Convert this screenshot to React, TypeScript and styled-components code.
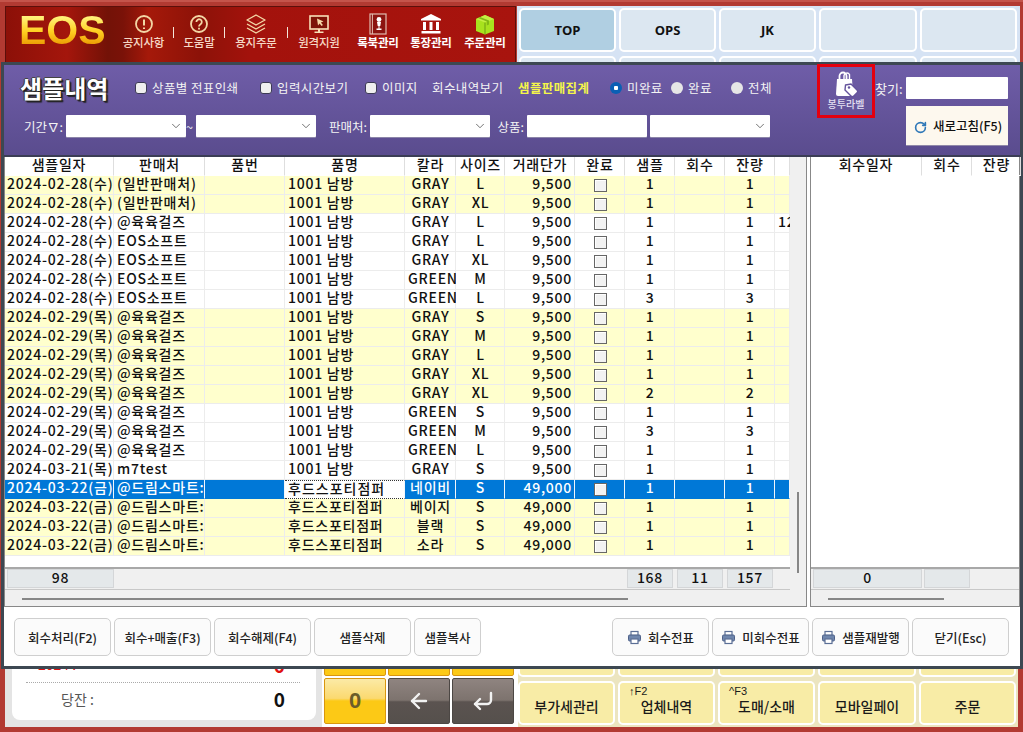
import React from "react";
import styled, { createGlobalStyle } from "styled-components";
import { RotateCw, ChevronDown, ArrowLeft, CornerDownLeft } from "lucide-react";

const FONT = '"Noto Sans CJK KR", "Noto Sans", sans-serif';

const Global = createGlobalStyle`
  html, body { margin: 0; padding: 0; background: #b23a32; }
  #root { width: 1023px; height: 732px; overflow: hidden; }
  * { box-sizing: border-box; }
`;

const Frame = styled.div`
  position: relative;
  width: 1023px;
  height: 732px;
  overflow: hidden;
  display: flex;
  flex-direction: column;
  justify-content: space-between;
  background: #b23a32;
  font-family: ${FONT};
  color: #111;
`;

/* ---------- background application ---------- */
const TopBar = styled.header`
  height: 62px;
  overflow: hidden;
  display: flex;
  padding: 4px 5px 0 5px;
  border-top: 2px solid #c4544b;
`;
const NavPanel = styled.nav`
  width: 512px;
  height: 58px;
  display: flex;
  border: 1px solid #5c0f0a;
  border-bottom: 2px solid #c8392c;
  background: linear-gradient(90deg, #8c1008 0, #a4160c 12%, #731207 20%, #7a1208 23%, #a5190a 28%, #8c1208 38%, #a3120c 48%, #a8140e 100%);
`;
const Logo = styled.div`
  width: 109px;
  padding-left: 13px;
  font: 700 41px/46px "Liberation Sans", sans-serif;
  background: linear-gradient(180deg, #fff27a 18%, #ffcf20 45%, #e89400 72%, #f8c010 85%);
  -webkit-background-clip: text;
  background-clip: text;
  color: transparent;
`;
const NavItem = styled.div<{ $w: number; $strong?: boolean }>`
  width: ${(p) => p.$w}px;
  flex: none;
  display: flex;
  flex-direction: column;
  align-items: center;
  padding-top: 6px;
  color: ${(p) => (p.$strong ? "#fff" : "#f6d8c6")};
  font-size: 11.5px;
  font-weight: ${(p) => (p.$strong ? 700 : 500)};
  letter-spacing: -0.2px;
  line-height: 14px;
  white-space: nowrap;
  svg { display: block; height: 22px; }
`;
const NavSep = styled.i`
  width: 1px;
  height: 11px;
  margin: 20px 1px 0;
  background: #f4e6da;
  flex: none;
`;
const CatGrid = styled.div`
  flex: 1;
  margin-left: 1px;
  display: grid;
  grid-template-columns: 97px 97px 97px 98px 97px;
  grid-auto-rows: 44px;
  gap: 4px 3px;
  background: #d6e3f4;
  padding: 2px 3px 0 2px;
`;
const CatButton = styled.div<{ $active?: boolean }>`
  display: flex;
  align-items: center;
  justify-content: center;
  border: 2px solid #fff;
  border-radius: 5px;
  background: ${(p) => (p.$active ? "#b0cfe2" : "#dce7f1")};
  font: 700 13px "Open Sans", sans-serif;
  color: #111;
`;

const BottomBar = styled.footer`
  height: 72px;
  display: flex;
  padding: 0 5px 5px 5px;
`;
const TotalsPanel = styled.section`
  width: 317px;
  padding: 0 6px 7px 7px;
  background: #e4e4e4;
  display: flex;
  flex-direction: column;
`;
const TotalsCard = styled.div`
  flex: 1;
  min-height: 0;
  background: #fff;
  border-radius: 0 0 8px 8px;
  padding: 0 16px 0 14px;
  display: flex;
  flex-direction: column;
  justify-content: flex-end;
`;
const TotalRow = styled.div<{ $red?: boolean }>`
  flex: none;
  display: flex;
  justify-content: space-between;
  height: ${(p) => (p.$red ? 36 : 38)}px;
  padding-bottom: ${(p) => (p.$red ? 0 : 6)}px;
  align-items: center;
  padding-left: ${(p) => (p.$red ? 12 : 35)}px;
  color: ${(p) => (p.$red ? "#e01010" : "#555")};
  font-size: 14px;
  & + & { border-top: 1px dotted #aaa; }
  b { color: ${(p) => (p.$red ? "#e01010" : "#111")}; font-size: 19px; font-weight: 700; margin-right: 15px; }
`;
const Keypad = styled.div`
  width: 196px;
  background: #fff;
  display: grid;
  grid-template-columns: repeat(3, 62px);
  grid-template-rows: 16px 46px;
  gap: 2px;
  padding: 0 0 3px 2px;
`;
const Key = styled.div<{ $dark?: boolean }>`
  display: flex;
  align-items: center;
  justify-content: center;
  border-radius: 2px;
  border: 1px solid ${(p) => (p.$dark ? "#4c4744" : "#d9960f")};
  background: ${(p) =>
    p.$dark
      ? "linear-gradient(180deg, #8f8480 0, #7d736e 48%, #5b5350 52%, #55504c 100%)"
      : "linear-gradient(180deg, #fbeaa6 0, #fbd970 44%, #fcc916 50%, #fcc916 100%)"};
  color: ${(p) => (p.$dark ? "#f2f2f2" : "#6d5d2a")};
  font: 700 22px "Liberation Sans", sans-serif;
`;
const ActionGrid = styled.div`
  flex: 1;
  display: grid;
  grid-template-columns: 97px 97px 97px 98px 97px;
  grid-template-rows: 17px 44px;
  gap: 4px 3px;
  padding: 0 0 2px 0;
  background: #ece5c0;
`;
const ActionButton = styled.div`
  position: relative;
  display: flex;
  align-items: center;
  justify-content: center;
  padding-top: 6px;
  border: 2px solid #fff;
  border-radius: 5px;
  background: #f8eca6;
  font-size: 14px;
  font-weight: 500;
  color: #1a1a1a;
`;
const Hint = styled.span`
  position: absolute;
  left: 9px;
  top: 2px;
  font: 400 11px "Liberation Sans", sans-serif;
`;

/* ---------- sample window ---------- */
const Window = styled.main`
  position: absolute;
  left: 1px;
  top: 62px;
  width: 1022px;
  height: 607px;
  border: 3px solid #3d4852;
  background: #fff;
  display: flex;
  flex-direction: column;
`;
const Head = styled.section`
  height: 92px;
  flex: none;
  display: flex;
  border-bottom: 2px solid #3b3d55;
  background: linear-gradient(180deg, #6f5da8 0, #5a4c8e 100%);
  color: #f4f4f4;
`;
const HeadMain = styled.div`
  width: 813px;
  flex: none;
`;
const OptionRow = styled.div`
  height: 46px;
  padding-left: 16px;
  display: flex;
  align-items: center;
`;
const Title = styled.h1`
  width: 115px;
  margin: 0;
  font-size: 24px;
  font-weight: 700;
  line-height: 1;
  color: #fff;
  text-shadow: 1px 1px 0 #222, -1px 0 0 #333, 0 -1px 0 #444, 2px 2px 1px #222;
`;
const Option = styled.label<{ $w: number; $yellow?: boolean; $bold?: boolean }>`
  width: ${(p) => p.$w}px;
  flex: none;
  display: flex;
  align-items: center;
  gap: 5px;
  font-size: 12.5px;
  letter-spacing: 0.4px;
  line-height: 1.3;
  white-space: nowrap;
  font-weight: ${(p) => (p.$bold ? 700 : 400)};
  color: ${(p) => (p.$yellow ? "#f4f54a" : "#f4f4f4")};
`;
const CheckMark = styled.i`
  width: 12px;
  height: 12px;
  border-radius: 3px;
  background: #efefef;
  border: 1px solid #3c3a55;
  flex: none;
`;
const RadioMark = styled.i<{ $on?: boolean }>`
  width: 12px;
  height: 12px;
  border-radius: 50%;
  flex: none;
  background: ${(p) =>
    p.$on ? "radial-gradient(circle, #fff 0 2px, #0a5fb4 2.5px)" : "#e6e6e6"};
`;
const FilterRow = styled.div`
  margin-top: 4px;
  height: 22px;
  display: flex;
  align-items: center;
  font-size: 12.5px;
`;
const FilterLabel = styled.span<{ $w: number }>`
  width: ${(p) => p.$w}px;
  flex: none;
  text-align: right;
  padding-right: 3px;
  white-space: nowrap;
`;
const Field = styled.div<{ $gap?: number }>`
  width: 120px;
  height: 22px;
  flex: none;
  margin-left: ${(p) => p.$gap || 0}px;
  background: #fff;
  border-radius: 1px;
  display: flex;
  align-items: center;
  justify-content: flex-end;
  padding-right: 3px;
  color: #555;
  box-shadow: 0 1px 0 #8b84a8;
`;
const LabelButton = styled.div`
  width: 58px;
  height: 54px;
  margin-top: -1px;
  flex: none;
  border: 3px solid #e4000f;
  display: flex;
  flex-direction: column;
  align-items: center;
  padding-top: 4px;
  font-size: 10px;
  font-weight: 500;
  line-height: 12px;
  color: #e4e0f2;
  svg { display: block; margin-bottom: 0; }
`;
const HeadSide = styled.div`
  flex: 1;
  padding: 12px 0 0 0;
  display: grid;
  grid-template-columns: 31px 102px;
  grid-template-rows: 22px 40px;
  row-gap: 7px;
  align-content: start;
  font-size: 13px;
`;
const FindLabel = styled.span`
  align-self: center;
`;
const FindInput = styled.div`
  background: #fff;
  border-radius: 1px;
`;
const RefreshButton = styled.div`
  grid-column: 2;
  background: #fdf8ee;
  border-bottom: 1px solid #9088a8;
  display: flex;
  align-items: center;
  gap: 6px;
  padding-left: 8px;
  color: #111;
  font-size: 12.5px;
  font-weight: 500;
  white-space: nowrap;
  svg { margin-top: 3px; color: #2f78b8; }
`;

const Panels = styled.section`
  height: 450px;
  flex: none;
  display: flex;
  gap: 3px;
`;
const ListPanel = styled.div<{ $w: number }>`
  width: ${(p) => p.$w}px;
  flex: none;
  display: flex;
  border: 1px solid #888;
  border-top: 0;
  background: #f0f0f0;
`;
const TableArea = styled.div`
  flex: 1;
  min-width: 0;
  display: flex;
  flex-direction: column;
`;
const COLS = "109px 91px 80px 120px 51px 49px 70px 50px 50px 50px 50px 15px";
const SUBCOLS = "111px 50px 49px";
const Row = styled.div<{ $cols: string; $bg?: string; $fg?: string }>`
  display: grid;
  grid-template-columns: ${(p) => p.$cols};
  height: 19px;
  flex: none;
  background: ${(p) => p.$bg || "#fff"};
  color: ${(p) => p.$fg || "#111"};
  font-size: 14px;
  font-weight: 500;
  letter-spacing: 0.75px;
  line-height: 15px;
`;
const Cell = styled.div<{ $align?: string; $head?: boolean; $focus?: boolean; $dark?: boolean; $cut?: boolean }>`
  min-width: 0;
  white-space: nowrap;
  padding: 0 2px 0 3px;
  text-align: ${(p) => p.$align || "left"};
  border-right: 1px solid ${(p) => (p.$dark ? "#f2f6fb" : p.$head ? "#dedede" : "#ececec")};
  border-bottom: 1px solid ${(p) => (p.$dark ? "#0078d7" : p.$head ? "#fff" : "#ececec")};
  &:first-child { padding-left: 2px; }
  ${(p) => p.$cut && "clip-path: inset(-4px 0 -4px 0);"}
  ${(p) => p.$focus && "background:#fff;color:#111;border-bottom:1px dotted #333;border-top:1px dotted #333;line-height:14px;letter-spacing:1px;"}
`;
const TickCell = styled(Cell)`
  display: flex;
  align-items: center;
  justify-content: center;
`;
const Tick = styled.i`
  width: 13px;
  height: 13px;
  background: #f2f2f2;
  border: 1px solid #666;
  box-shadow: inset 1px 1px 0 #fff;
`;
const Filler = styled.div`
  flex: 1;
  background: #fff;
`;
const Summary = styled.div<{ $cols: string }>`
  height: 22px;
  flex: none;
  display: grid;
  grid-template-columns: ${(p) => p.$cols};
  border-top: 2px solid #a8a8a8;
  background: #f0f0f0;
  font-size: 14px;
  font-weight: 500;
  letter-spacing: 0.75px;
  line-height: 15px;
`;
const SumCell = styled.div<{ $hide?: boolean; $first?: boolean }>`
  height: 19px;
  margin: 0 ${(p) => (p.$first ? 0 : 2)}px 0 2px;
  text-align: center;
  ${(p) => !p.$hide && "background:#e4e8ea;border:1px solid #d4d6d8;"}
`;
const HScroll = styled.div<{ $pad: number; $w: number }>`
  height: 17px;
  flex: none;
  border-top: 1px solid #c8c8c8;
  background: #f0f0f0;
  padding: 8px 0 0 ${(p) => p.$pad}px;
  &::after {
    content: "";
    display: block;
    width: ${(p) => p.$w}px;
    height: 2px;
    background: #868686;
  }
`;
const VScroll = styled.div`
  width: 16px;
  flex: none;
  padding: 335px 0 0 7px;
  &::after {
    content: "";
    display: block;
    width: 2px;
    height: 81px;
    background: #868686;
  }
`;
const Foot = styled.section`
  flex: 1;
  display: flex;
  justify-content: space-between;
  align-items: flex-start;
  padding: 11px 11px 0 10px;
`;
const FootGroup = styled.div`
  display: flex;
  gap: 3px;
`;
const FootButton = styled.div<{ $w?: number }>`
  width: ${(p) => p.$w || 97}px;
  height: 38px;
  border: 1px solid #cfcfcf;
  border-radius: 5px;
  background: #fbfbfb;
  display: flex;
  align-items: center;
  justify-content: center;
  gap: 6px;
  font-size: 12.5px;
  font-weight: 500;
  color: #222;
  white-space: nowrap;
`;

const AlertIcon = () => (
  <svg width="22" height="22" viewBox="0 0 22 22" fill="none" stroke="#f3d7a6" strokeWidth="1.8">
    <circle cx="11" cy="11" r="8" />
    <path d="M11 6.5v6M11 14.5v1.6" strokeWidth="2" />
  </svg>
);
const HelpIcon = () => (
  <svg width="22" height="22" viewBox="0 0 22 22" fill="none" stroke="#f3d7a6" strokeWidth="1.8">
    <circle cx="11" cy="11" r="8" />
    <path d="M8.4 9a2.7 2.7 0 1 1 4.2 2.2c-1 .7-1.6 1.1-1.6 2.3M11 14.8v1.6" />
  </svg>
);
const LayersIcon = () => (
  <svg width="24" height="22" viewBox="0 0 24 22" fill="none" stroke="#f3d7a6" strokeWidth="1.4" strokeLinejoin="round">
    <path d="M12 2l9 5-9 5-9-5z" />
    <path d="M3 11l9 5 9-5" />
    <path d="M3 15l9 5 9-5" />
  </svg>
);
const RemoteIcon = () => (
  <svg width="24" height="22" viewBox="0 0 24 22">
    <rect x="3" y="3" width="18" height="13" fill="#7d1208" stroke="#f8e0b8" strokeWidth="1.6" />
    <path d="M10 5.5l6.5 3-2.6 1 2 2.4-1.3 1-2-2.4-1.6 2z" fill="#f6d8a8" />
    <path d="M11 16h2v2.5h3.5V20h-9v-1.5H11z" fill="#f8e0b8" />
  </svg>
);
const BookIcon = () => (
  <svg width="22" height="22" viewBox="0 0 22 22">
    <rect x="3" y="1" width="16" height="20" fill="#8c1410" stroke="#e2bcb0" strokeWidth="1.2" />
    <path d="M5.4 1v20" stroke="#e2bcb0" strokeWidth="1" />
    <circle cx="12" cy="6.5" r="2.4" fill="#fff" />
    <path d="M10 9h4l-.7 4h-.8v2.5h2V17h-5v-1.5h2V13h-.8z" fill="#fff" />
  </svg>
);
const BankIcon = () => (
  <svg width="24" height="22" viewBox="0 0 24 22" fill="#fff">
    <path d="M12 1l10 5v1.5H2V6z" />
    <path d="M4 9h3v8H4zM10.5 9h3v8h-3zM17 9h3v8h-3z" />
    <path d="M2.5 18h19v2.5h-19z" />
  </svg>
);
const BoxIcon = () => (
  <svg width="24" height="22" viewBox="0 0 24 22">
    <path d="M3 6l9-4 9 4v12l-9 3.5L3 18z" fill="#a8e21e" />
    <path d="M3 6l9 3.5L21 6l-9-4z" fill="#c4ee42" />
    <path d="M12 9.5v12" stroke="#6c9c10" strokeWidth="1" />
    <path d="M7 4l9 3.6v4l-2.2.8V8.4L5 4.9z" fill="#82b814" />
  </svg>
);
const BagTagIcon = () => (
  <svg width="26" height="27" viewBox="0 0 26 27">
    <path d="M6.5 8V5a3.5 3.5 0 0 1 7 0v3" fill="none" stroke="#fff" strokeWidth="1.8" />
    <path d="M11 8V4.5a3 3 0 0 1 5.5 -1V8" fill="none" stroke="#fff" strokeWidth="1.4" />
    <path d="M4 8h15l1 15a2 2 0 0 1-2 2H5a2 2 0 0 1-2-2z" fill="#fff" />
    <path d="M12.5 14l5.5-1 6 6a2 2 0 0 1 0 2.8l-3.2 3.2a2 2 0 0 1-2.8 0l-6-6z" fill="#fff" stroke="#64539c" strokeWidth="1.4" />
    <circle cx="16" cy="16.5" r="1.2" fill="#64539c" />
  </svg>
);
const PrinterIcon = () => (
  <svg width="15" height="15" viewBox="0 0 15 15">
    <rect x="4" y="1.5" width="7" height="4" fill="#fff" stroke="#5b6f96" strokeWidth="1.2" />
    <rect x="1.5" y="5" width="12" height="6" rx="1.2" fill="#6f86ad" stroke="#4d6088" strokeWidth="1" />
    <rect x="4" y="9" width="7" height="4.5" fill="#fff" stroke="#5b6f96" strokeWidth="1.2" />
  </svg>
);

type Rec = [string, string, string, string, string, string, string, string, string?];
const r = (d: string, s: string, n: string, c: string, z: string, p: string, q = "1", x?: string): Rec => [d, s, n, c, z, p, q, q, x];
const N = "1001 남방";
const ROWS: Rec[] = [
  r("2024-02-28(수)", "(일반판매처)", N, "GRAY", "L", "9,500"),
  r("2024-02-28(수)", "(일반판매처)", N, "GRAY", "XL", "9,500"),
  r("2024-02-28(수)", "@육육걸즈", N, "GRAY", "L", "9,500", "1", "12"),
  r("2024-02-28(수)", "EOS소프트", N, "GRAY", "L", "9,500"),
  r("2024-02-28(수)", "EOS소프트", N, "GRAY", "XL", "9,500"),
  r("2024-02-28(수)", "EOS소프트", N, "GREEN", "M", "9,500"),
  r("2024-02-28(수)", "EOS소프트", N, "GREEN", "L", "9,500", "3"),
  r("2024-02-29(목)", "@육육걸즈", N, "GRAY", "S", "9,500"),
  r("2024-02-29(목)", "@육육걸즈", N, "GRAY", "M", "9,500"),
  r("2024-02-29(목)", "@육육걸즈", N, "GRAY", "L", "9,500"),
  r("2024-02-29(목)", "@육육걸즈", N, "GRAY", "XL", "9,500"),
  r("2024-02-29(목)", "@육육걸즈", N, "GRAY", "XL", "9,500", "2"),
  r("2024-02-29(목)", "@육육걸즈", N, "GREEN", "S", "9,500"),
  r("2024-02-29(목)", "@육육걸즈", N, "GREEN", "M", "9,500", "3"),
  r("2024-02-29(목)", "@육육걸즈", N, "GREEN", "L", "9,500"),
  r("2024-03-21(목)", "m7test", N, "GRAY", "S", "9,500"),
  r("2024-03-22(금)", "@드림스마트:", "후드스포티점퍼", "네이비", "S", "49,000"),
  r("2024-03-22(금)", "@드림스마트:", "후드스포티점퍼", "베이지", "S", "49,000"),
  r("2024-03-22(금)", "@드림스마트:", "후드스포티점퍼", "블랙", "S", "49,000"),
  r("2024-03-22(금)", "@드림스마트:", "후드스포티점퍼", "소라", "S", "49,000"),
];
const YELLOW = new Set([0, 1, 7, 8, 9, 10, 11, 17, 18, 19]);
const SELECTED = 16;
const HEADS = ["샘플일자", "판매처", "품번", "품명", "칼라", "사이즈", "거래단가", "완료", "샘플", "회수", "잔량", ""];

const Select = ({ gap }: { gap?: number }) => (
  <Field $gap={gap}>
    <ChevronDown size={14} strokeWidth={1.4} />
  </Field>
);

export default function App() {
  return (
    <Frame>
      <Global />
      <TopBar>
        <NavPanel>
          <Logo>EOS</Logo>
          <NavItem $w={57}><AlertIcon />공지사항</NavItem>
          <NavSep />
          <NavItem $w={48}><HelpIcon />도움말</NavItem>
          <NavSep />
          <NavItem $w={60}><LayersIcon />용지주문</NavItem>
          <NavSep />
          <NavItem $w={60}><RemoteIcon />원격지원</NavItem>
          <NavItem $w={58} $strong><BookIcon />록북관리</NavItem>
          <NavItem $w={48} $strong><BankIcon />통장관리</NavItem>
          <NavItem $w={60} $strong><BoxIcon />주문관리</NavItem>
        </NavPanel>
        <CatGrid>
          <CatButton $active>TOP</CatButton>
          <CatButton>OPS</CatButton>
          <CatButton>JK</CatButton>
          <CatButton />
          <CatButton />
          {[0, 1, 2, 3, 4].map((i) => <CatButton key={i} />)}
        </CatGrid>
      </TopBar>

      <BottomBar>
        <TotalsPanel>
          <TotalsCard>
            <TotalRow $red>2024 :<b>0</b></TotalRow>
            <TotalRow>당잔 :<b>0</b></TotalRow>
          </TotalsCard>
        </TotalsPanel>
        <Keypad>
          <Key /><Key /><Key />
          <Key>0</Key>
          <Key $dark><ArrowLeft size={24} strokeWidth={2.4} /></Key>
          <Key $dark><CornerDownLeft size={24} strokeWidth={2.4} /></Key>
        </Keypad>
        <ActionGrid>
          <ActionButton /><ActionButton /><ActionButton /><ActionButton /><ActionButton />
          <ActionButton>부가세관리</ActionButton>
          <ActionButton><Hint>↑F2</Hint>업체내역</ActionButton>
          <ActionButton><Hint>^F3</Hint>도매/소매</ActionButton>
          <ActionButton>모바일페이</ActionButton>
          <ActionButton>주문</ActionButton>
        </ActionGrid>
      </BottomBar>

      <Window>
        <Head>
          <HeadMain>
            <OptionRow>
              <Title>샘플내역</Title>
              <Option $w={125}><CheckMark />상품별 전표인쇄</Option>
              <Option $w={105}><CheckMark />입력시간보기</Option>
              <Option $w={67}><CheckMark />이미지</Option>
              <Option $w={86}>회수내역보기</Option>
              <Option $w={92} $yellow $bold>샘플판매집계</Option>
              <Option $w={61}><RadioMark $on />미완료</Option>
              <Option $w={60}><RadioMark />완료</Option>
              <Option $w={50}><RadioMark />전체</Option>
            </OptionRow>
            <FilterRow>
              <FilterLabel $w={62}>기간∇:</FilterLabel>
              <Select />
              <FilterLabel $w={10}>~</FilterLabel>
              <Select />
              <FilterLabel $w={54}>판매처:</FilterLabel>
              <Select />
              <FilterLabel $w={37}>상품:</FilterLabel>
              <Field />
              <Select gap={3} />
            </FilterRow>
          </HeadMain>
          <LabelButton><BagTagIcon />봉투라벨</LabelButton>
          <HeadSide>
            <FindLabel>찾기:</FindLabel>
            <FindInput />
            <RefreshButton><RotateCw size={13} strokeWidth={3} />새로고침(F5)</RefreshButton>
          </HeadSide>
        </Head>

        <Panels>
          <ListPanel $w={803}>
            <TableArea>
              <Row $cols={COLS}>
                {HEADS.map((h, i) => <Cell key={i} $head $align="center">{h}</Cell>)}
              </Row>
              {ROWS.map((row, i) => {
                const sel = i === SELECTED;
                const bg = sel ? "#0078d7" : YELLOW.has(i) ? "#ffffcd" : "#fff";
                const fg = sel ? "#fff" : "#111";
                return (
                  <Row key={i} $cols={COLS} $bg={bg} $fg={fg}>
                    <Cell $dark={sel}>{row[0]}</Cell>
                    <Cell $dark={sel}>{row[1]}</Cell>
                    <Cell $dark={sel} />
                    <Cell $dark={sel} $focus={sel}>{row[2]}</Cell>
                    <Cell $dark={sel} $align="center" $cut>{row[3]}</Cell>
                    <Cell $dark={sel} $align="center">{row[4]}</Cell>
                    <Cell $dark={sel} $align="right">{row[5]}</Cell>
                    <TickCell $dark={sel}><Tick /></TickCell>
                    <Cell $dark={sel} $align="center">{row[6]}</Cell>
                    <Cell $dark={sel} />
                    <Cell $dark={sel} $align="center">{row[7]}</Cell>
                    <Cell $dark={sel} $cut>{row[8]}</Cell>
                  </Row>
                );
              })}
              <Filler />
              <Summary $cols={COLS}>
                <SumCell $first>98</SumCell>
                <SumCell $hide /><SumCell $hide /><SumCell $hide /><SumCell $hide /><SumCell $hide /><SumCell $hide /><SumCell $hide />
                <SumCell>168</SumCell>
                <SumCell>11</SumCell>
                <SumCell>157</SumCell>
              </Summary>
              <HScroll $pad={17} $w={606} />
            </TableArea>
            <VScroll />
          </ListPanel>
          <ListPanel $w={210}>
            <TableArea>
              <Row $cols={SUBCOLS}>
                <Cell $head $align="center">회수일자</Cell>
                <Cell $head $align="center">회수</Cell>
                <Cell $head $align="center">잔량</Cell>
              </Row>
              <Filler />
              <Summary $cols={SUBCOLS}>
                <SumCell $first>0</SumCell>
                <SumCell />
              </Summary>
              <HScroll $pad={17} $w={116} />
            </TableArea>
          </ListPanel>
        </Panels>

        <Foot>
          <FootGroup>
            <FootButton>회수처리(F2)</FootButton>
            <FootButton>회수+매출(F3)</FootButton>
            <FootButton>회수해제(F4)</FootButton>
            <FootButton>샘플삭제</FootButton>
            <FootButton $w={67}>샘플복사</FootButton>
          </FootGroup>
          <FootGroup>
            <FootButton><PrinterIcon />회수전표</FootButton>
            <FootButton><PrinterIcon />미회수전표</FootButton>
            <FootButton><PrinterIcon />샘플재발행</FootButton>
            <FootButton>닫기(Esc)</FootButton>
          </FootGroup>
        </Foot>
      </Window>
    </Frame>
  );
}
